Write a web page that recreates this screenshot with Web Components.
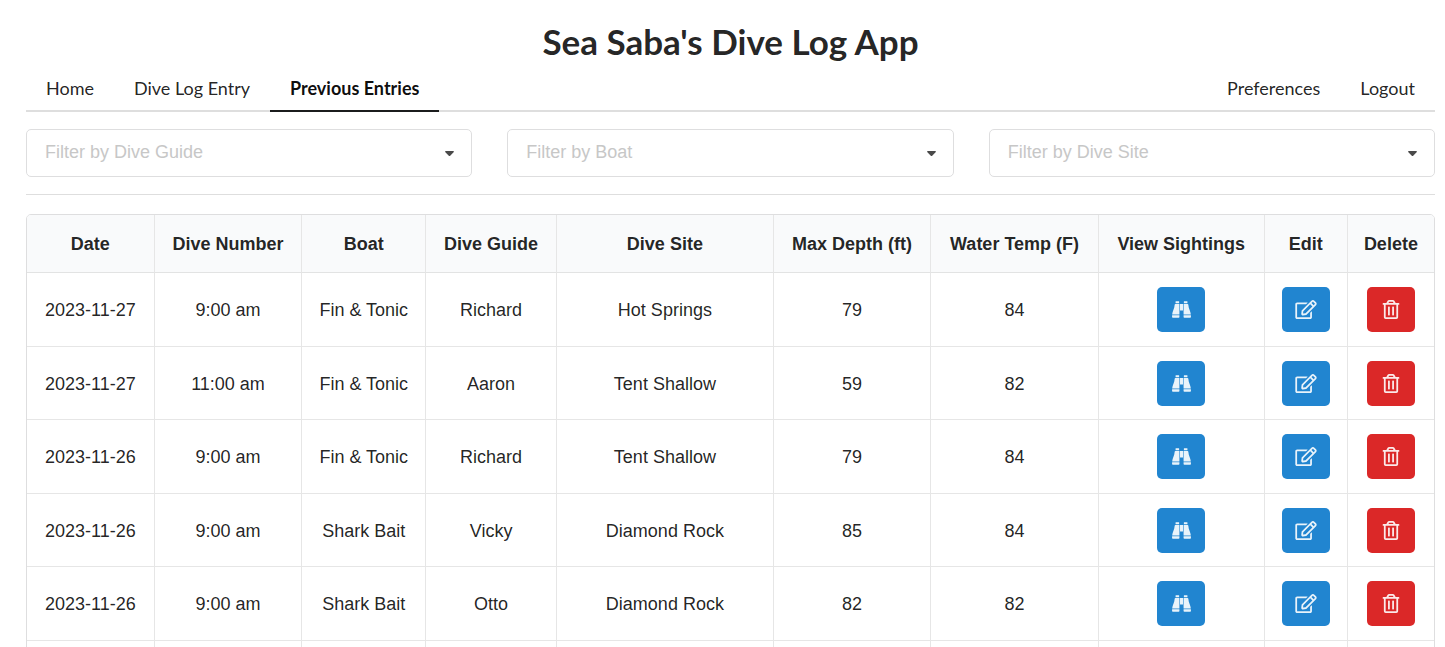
<!DOCTYPE html>
<html lang="en">
<head>
<meta charset="utf-8">
<title>Sea Saba's Dive Log App</title>
<style>
  html, body { margin: 0; height: 100%; }
  body { background: #fff; color: rgba(0,0,0,.87); font-family: "Liberation Sans", Arial, sans-serif; font-size: 18px; overflow: hidden; }
</style>
</head>
<body>
<dive-app></dive-app>
<script>
const ICONS = {
  view: ['0 0 512 512', 'M104 32h80q8 0 8 8v50H96V40q0-8 8-8zM328 32h80q8 0 8 8v50h-96V40q0-8 8-8zM92 108h108v284H4C14 290 66 240 72 128q2-20 20-20zM312 108h108q18 0 20 20c6 112 58 162 68 264H312zM216 108h80v174h-80zM2 410h198v50q0 20-20 20H22q-20 0-20-20zM312 410h198v50q0 20-20 20H332q-20 0-20-20z'],
  edit: ['0 0 576 512', 'M402.3 344.9l32-32c5-5 13.7-1.5 13.7 5.7V464c0 26.5-21.5 48-48 48H48c-26.5 0-48-21.5-48-48V112c0-26.5 21.5-48 48-48h273.5c7.1 0 10.7 8.6 5.7 13.7l-32 32c-1.5 1.5-3.5 2.3-5.7 2.3H48v352h352V350.5c0-2.1.8-4.1 2.3-5.6zm156.6-201.8L296.3 405.7l-90.4 10c-26.2 2.9-48.5-19.2-45.6-45.6l10-90.4L432.9 17.1c22.9-22.9 59.9-22.9 82.7 0l43.2 43.2c22.9 22.9 22.9 60 .1 82.8zM460.1 174L402 115.9 216.2 301.8l-7.3 65.3 65.3-7.3L460.1 174zm64.8-79.7l-43.2-43.2c-4.1-4.1-10.8-4.1-14.8 0L436 82l58.1 58.1 30.9-30.9c4-4.2 4-10.8-.1-14.9z'],
  delete: ['0 0 448 512', 'M268 416h24a12 12 0 0 0 12-12V188a12 12 0 0 0-12-12h-24a12 12 0 0 0-12 12v216a12 12 0 0 0 12 12zM432 80h-82.41l-34-56.7A48 48 0 0 0 274.41 0H173.59a48 48 0 0 0-41.16 23.3L98.41 80H16A16 16 0 0 0 0 96v16a16 16 0 0 0 16 16h16v336a48 48 0 0 0 48 48h288a48 48 0 0 0 48-48V128h16a16 16 0 0 0 16-16V96a16 16 0 0 0-16-16zM171.84 50.91A6 6 0 0 1 177 48h94a6 6 0 0 1 5.15 2.91L293.61 80H154.39zM368 464H80V128h288zm-212-48h24a12 12 0 0 0 12-12V188a12 12 0 0 0-12-12h-24a12 12 0 0 0-12 12v216a12 12 0 0 0 12 12z']
};

class IconButton extends HTMLElement {
  constructor() {
    super();
    const kind = this.getAttribute('kind');
    const [box, path] = ICONS[kind];
    this.attachShadow({ mode: 'open' }).innerHTML = `
      <style>
        :host { display: inline-block; vertical-align: top; }
        button { display: flex; align-items: center; justify-content: center; width: 48px; height: 45px; margin: 0; padding: 0; border: 0; border-radius: 5px; background: #2185d0; cursor: pointer; }
        button.delete { background: #db2828; }
        svg { display: block; height: 19px; width: 22px; fill: #fff; opacity: .9; }
        .view svg { height: 19px; width: 19px; }
      </style>
      <button type="button" class="${kind}" aria-label="${this.getAttribute('label')}">
        <svg viewBox="${box}" aria-hidden="true"><path d="${path}"/></svg>
      </button>`;
  }
}
customElements.define('icon-button', IconButton);

class MenuItem extends HTMLElement {
  constructor() {
    super();
    this.attachShadow({ mode: 'open' }).innerHTML = `
      <style>
        :host { display: block; margin-bottom: -2px; }
        a { display: block; padding: 14px 20px 12px; border-bottom: 2px solid transparent; color: rgba(0,0,0,.87); font: 400 18px/20px Lato, sans-serif; text-decoration: none; }
        :host([active]) a { border-color: #1b1c1d; color: rgba(0,0,0,.95); font-weight: 700; }
      </style>
      <a href="#"><slot></slot></a>`;
  }
}
customElements.define('menu-item', MenuItem);

class AppMenu extends HTMLElement {
  constructor() {
    super();
    this.attachShadow({ mode: 'open' }).innerHTML = `
      <style>
        :host { display: block; }
        nav { display: flex; border-bottom: 2px solid #dedede; }
        .right { display: flex; margin-left: auto; }
      </style>
      <nav><slot></slot><div class="right"><slot name="right"></slot></div></nav>`;
  }
}
customElements.define('app-menu', AppMenu);

class FilterSelect extends HTMLElement {
  constructor() {
    super();
    const label = this.getAttribute('label');
    this.attachShadow({ mode: 'open' }).innerHTML = `
      <style>
        :host { display: grid; align-items: center; }
        select, svg { grid-area: 1 / 1; }
        select { appearance: none; box-sizing: border-box; width: 100%; height: 48px; margin: 0; padding: 0 40px 2px 18px; border: 1px solid #dededf; border-radius: 5px; background: #fff; color: #c7c7c7; font: 18px "Liberation Sans", Arial, sans-serif; }
        svg { justify-self: end; width: 9px; height: 5px; margin-right: 18px; fill: #4a4a4a; pointer-events: none; }
      </style>
      <select aria-label="${label}"><option>${label}</option></select>
      <svg viewBox="0 0 9 5" aria-hidden="true"><path d="M.6 0h7.8q.8.6.2 1.200L5.200 4.700q-.7.500-1.400 0L.4 1.200Q-.2.600.6 0z"/></svg>`;
  }
}
customElements.define('filter-select', FilterSelect);

class DiveTable extends HTMLElement {
  constructor() {
    super();
    const heads = ['Date', 'Dive Number', 'Boat', 'Dive Guide', 'Dive Site', 'Max Depth (ft)', 'Water Temp (F)', 'View Sightings', 'Edit', 'Delete'];
    const dives = [
      ['2023-11-27', '9:00 am', 'Fin & Tonic', 'Richard', 'Hot Springs', 79, 84],
      ['2023-11-27', '11:00 am', 'Fin & Tonic', 'Aaron', 'Tent Shallow', 59, 82],
      ['2023-11-26', '9:00 am', 'Fin & Tonic', 'Richard', 'Tent Shallow', 79, 84],
      ['2023-11-26', '9:00 am', 'Shark Bait', 'Vicky', 'Diamond Rock', 85, 84],
      ['2023-11-26', '9:00 am', 'Shark Bait', 'Otto', 'Diamond Rock', 82, 82]
    ];
    const actions = '<td><icon-button kind="view" label="View sightings"></icon-button></td><td><icon-button kind="edit" label="Edit dive"></icon-button></td><td><icon-button kind="delete" label="Delete dive"></icon-button></td>';
    const esc = v => String(v).replace('&', '&amp;');
    this.attachShadow({ mode: 'open' }).innerHTML = `
      <style>
        :host { display: block; }
        table { width: 100%; table-layout: fixed; border: 1px solid #dededf; border-radius: 5px; border-collapse: separate; border-spacing: 0; text-align: center; font-size: 18px; line-height: 20px; }
        th, td { border-left: 1px solid #e6e6e6; white-space: nowrap; }
        th:first-child, td:first-child { border-left: 0; }
        th { height: 57px; padding: 0; border-bottom: 1px solid #e2e3e3; background: #f9fafb; font-weight: 700; }
        th:first-child { border-top-left-radius: 4px; }
        th:last-child { border-top-right-radius: 4px; }
        td { padding: 14px 0; border-bottom: 1px solid #e6e6e6; }
        tr:nth-child(even) td { padding-bottom: 13px; }
        .w-date { width: 9%; } .w-number { width: 10.5%; } .w-boat { width: 8.8%; } .w-guide { width: 9.3%; }
        .w-depth { width: 11.2%; } .w-temp { width: 11.9%; } .w-view { width: 11.8%; } .w-edit { width: 5.9%; } .w-delete { width: 6.2%; }
      </style>
      <table>
        <colgroup><col class="w-date"><col class="w-number"><col class="w-boat"><col class="w-guide"><col><col class="w-depth"><col class="w-temp"><col class="w-view"><col class="w-edit"><col class="w-delete"></colgroup>
        <thead><tr>${heads.map(h => `<th scope="col">${h}</th>`).join('')}</tr></thead>
        <tbody>
          ${dives.map(d => `<tr>${d.map(v => `<td>${esc(v)}</td>`).join('')}${actions}</tr>`).join('')}
          <tr>${'<td></td>'.repeat(10)}</tr>
        </tbody>
      </table>`;
  }
}
customElements.define('dive-table', DiveTable);

class DiveApp extends HTMLElement {
  constructor() {
    super();
    this.attachShadow({ mode: 'open' }).innerHTML = `
      <style>
        :host { display: block; padding: 18px 10px 0 26px; }
        h1 { margin: 0; text-align: center; font: 700 35px/46px Lato, sans-serif; }
        .filters { display: grid; grid-template-columns: repeat(3, 1fr); gap: 35px; padding: 17px 0; border-bottom: 1px solid #dedede; margin-bottom: 19px; }
      </style>
      <h1>Sea Saba's Dive Log App</h1>
      <app-menu>
        <menu-item>Home</menu-item><menu-item>Dive Log Entry</menu-item><menu-item active>Previous Entries</menu-item>
        <menu-item slot="right">Preferences</menu-item><menu-item slot="right">Logout</menu-item>
      </app-menu>
      <div class="filters">
        <filter-select label="Filter by Dive Guide"></filter-select>
        <filter-select label="Filter by Boat"></filter-select>
        <filter-select label="Filter by Dive Site"></filter-select>
      </div>
      <dive-table></dive-table>`;
  }
}
customElements.define('dive-app', DiveApp);
</script>
</body>
</html>
